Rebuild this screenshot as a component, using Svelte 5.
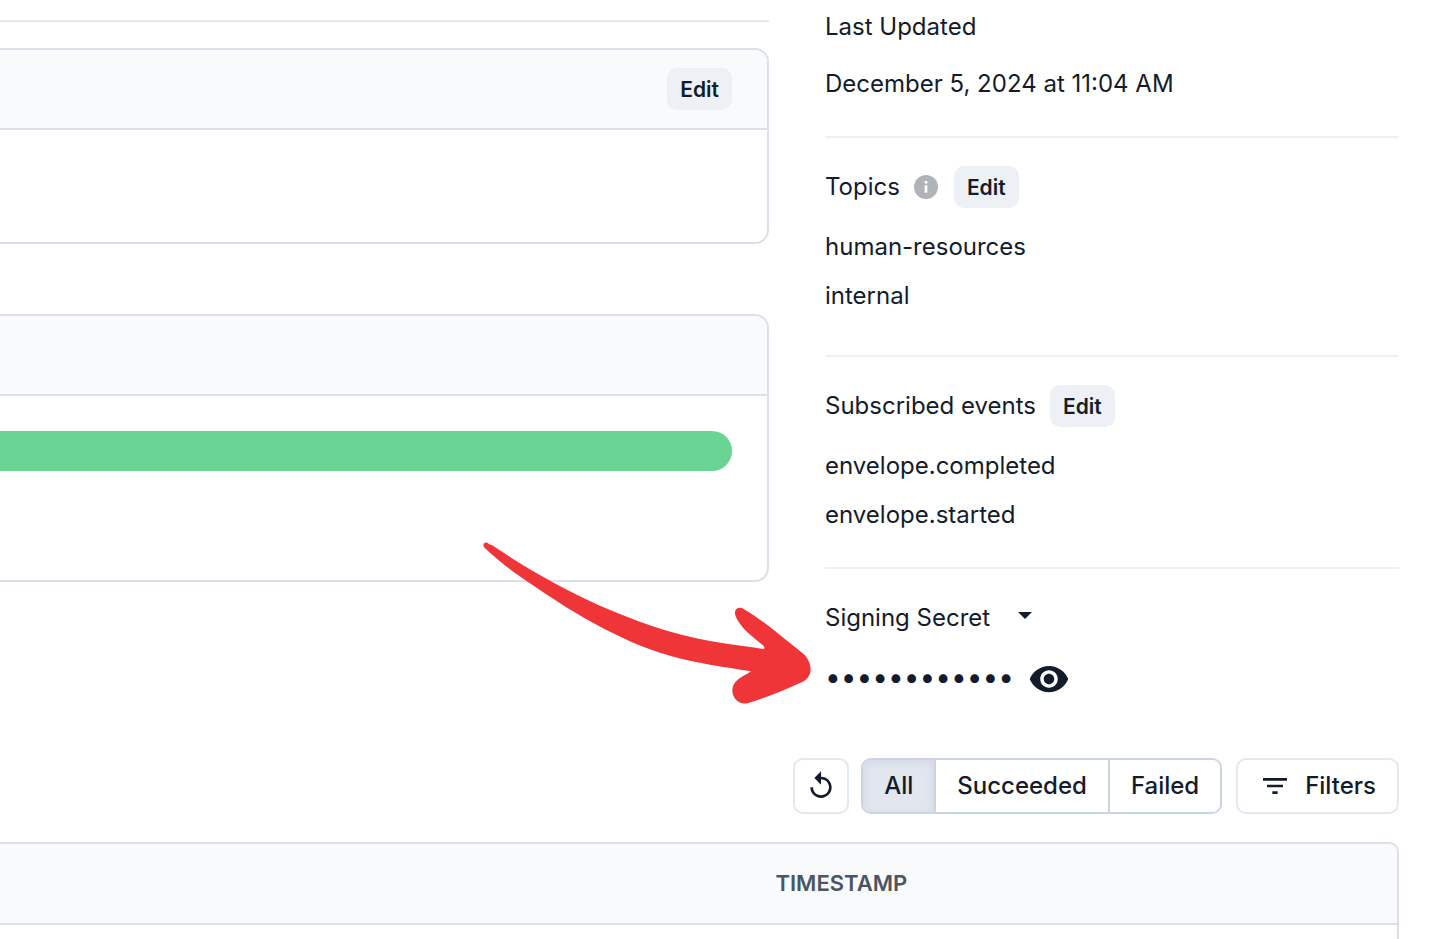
<script lang="ts">
  type Status = 'All' | 'Succeeded' | 'Failed';

  const topics = ['human-resources', 'internal'];
  const events = ['envelope.completed', 'envelope.started'];
  const statuses: Status[] = ['All', 'Succeeded', 'Failed'];

  let status = $state<Status>('All');
</script>

<main class="page">
  <div class="overview">
    <div class="panels">
      <hr class="rule" />

      <section class="card">
        <header class="card-head">
          <button type="button" class="edit">Edit</button>
        </header>
        <div class="card-body"></div>
      </section>

      <section class="card">
        <header class="card-head"></header>
        <div class="card-body tall">
          <div class="rate"></div>
        </div>
      </section>
    </div>

    <aside class="details">
      <section class="detail first">
        <div class="detail-head">Last Updated</div>
        <p class="value">December 5, 2024 at 11:04 AM</p>
      </section>

      <section class="detail topics">
        <div class="detail-head">
          <span>Topics</span>
          <svg class="info" viewBox="0 0 24 24" aria-hidden="true">
            <circle cx="12" cy="12" r="12" />
            <path d="M10.700 6h2.600v2.400h-2.600zM10.700 10.200h2.600v7.600h-2.600z" />
          </svg>
          <button type="button" class="edit">Edit</button>
        </div>
        <ul class="values">
          {#each topics as topic}
            <li class="value">{topic}</li>
          {/each}
        </ul>
      </section>

      <section class="detail">
        <div class="detail-head">
          <span>Subscribed events</span>
          <button type="button" class="edit">Edit</button>
        </div>
        <ul class="values">
          {#each events as event}
            <li class="value">{event}</li>
          {/each}
        </ul>
      </section>

      <section class="detail">
        <div class="detail-head">
          <label for="secret">Signing Secret</label>
          <button type="button" class="bare caret" aria-label="Signing secret options">
            <svg width="14" height="7" viewBox="0 0 14 7"><path d="M0 0h14L7 7z" /></svg>
          </button>
        </div>
        <div class="secret">
          <input id="secret" type="password" value="whsec_a1b2c3" readonly />
          <button type="button" class="bare" aria-label="Reveal secret">
            <svg width="42" height="42" viewBox="0 0 24 24">
              <path
                d="M12 4.500C7 4.500 2.730 7.610 1 12c1.730 4.390 6 7.500 11 7.500s9.270-3.110 11-7.500c-1.730-4.390-6-7.500-11-7.500zM12 17c-2.760 0-5-2.240-5-5s2.240-5 5-5 5 2.240 5 5-2.240 5-5 5zm0-8c-1.660 0-3 1.340-3 3s1.340 3 3 3 3-1.340 3-3-1.340-3-3-3z"
              />
            </svg>
          </button>
          <svg class="pointer" viewBox="39 36 984 486" aria-hidden="true">
            <path
              d="M40 44C42 37 52 35 57 43C66 43 75 52 85 58C175 119 285 180 390 227C500 275 610 313 720 333C775 343 830 349 880 357Q887 355 879 346C855 325 825 304 810 281C798 265 794 252 795 246C796 234 810 230 820 236C880 271 935 321 1000 371C1016 385 1022 405 1022 419C1021 437 1010 450 995 457C945 480 890 502 835 519C805 528 786 500 787 480C788 450 820 440 843 424C760 410 680 400 600 377C520 354 450 322 380 284C330 258 260 214 200 173C145 138 90 98 42 52Z"
            />
          </svg>
        </div>
      </section>
    </aside>
  </div>

  <div class="toolbar">
    <button type="button" class="tool icon-only" aria-label="Refresh">
      <svg width="32" height="32" viewBox="0 0 24 24">
        <path
          d="M12 5V1L7 6l5 5V7c3.310 0 6 2.690 6 6s-2.690 6-6 6-6-2.690-6-6H4c0 4.420 3.580 8 8 8s8-3.580 8-8-3.580-8-8-8z"
        />
      </svg>
    </button>
    <div class="segments" role="group" aria-label="Status">
      {#each statuses as item}
        <button
          type="button"
          class="segment"
          class:active={status === item}
          aria-pressed={status === item}
          onclick={() => (status = item)}
        >
          {item}
        </button>
      {/each}
    </div>
    <button type="button" class="tool">
      <svg width="32" height="32" viewBox="0 0 24 24">
        <path d="M10 18h4v-2h-4v2zM3 6v2h18V6H3zm3 7h12v-2H6v2z" />
      </svg>
      Filters
    </button>
  </div>

  <div class="log">
    <table>
      <thead>
        <tr>
          <td></td>
          <th scope="col">TIMESTAMP</th>
        </tr>
      </thead>
      <tbody>
        <tr>
          <td></td>
          <td></td>
        </tr>
      </tbody>
    </table>
  </div>
</main>

<style>
  :global(body) {
    margin: 0;
    background: #fff;
    overflow: hidden;
  }

  .page {
    box-sizing: border-box;
    height: 100vh;
    overflow: hidden;
    padding-right: 45px;
    color: #141c2b;
    font-family: Inter, sans-serif;
    font-size: 24px;
    line-height: 49px;
  }

  button {
    color: inherit;
    font: inherit;
    cursor: pointer;
  }

  svg {
    display: block;
    flex-shrink: 0;
    fill: currentColor;
  }

  .overview {
    display: grid;
    grid-template-columns: 1fr 574px;
    column-gap: 56px;
    align-items: start;
  }

  .panels {
    padding-top: 20px;
  }

  .rule {
    margin: 0 0 26px;
    border: 0;
    border-top: 2px solid #e2e8f0;
  }

  .card {
    margin-bottom: 70px;
    border: 2px solid #dfdfeb;
    border-left: 0;
    border-radius: 0 14px 14px 0;
    overflow: hidden;
  }

  .card:last-child {
    margin-bottom: 0;
  }

  .card-head {
    display: flex;
    align-items: center;
    justify-content: flex-end;
    height: 78px;
    padding-right: 35px;
    background: #f9fafc;
    border-bottom: 2px solid #dfdfeb;
  }

  .card-body {
    height: 112px;
  }

  .card-body.tall {
    box-sizing: border-box;
    height: 184px;
    padding: 35px 35px 0 0;
  }

  .rate {
    height: 40px;
    border-radius: 0 20px 20px 0;
    background: #6ad494;
  }

  .edit {
    height: 42px;
    padding: 2px 13px 0;
    border: 0;
    border-radius: 10px;
    background: #edf1f6;
    font-size: 21px;
    font-weight: 600;
    line-height: 40px;
  }

  .details {
    padding-top: 6px;
  }

  .detail {
    padding: 28px 0;
    border-bottom: 2px solid #edf1f5;
  }

  .detail.first {
    padding-top: 0;
  }

  .detail.topics {
    padding-bottom: 35px;
  }

  .detail:last-child {
    padding-bottom: 0;
    border-bottom: 0;
  }

  .detail-head {
    display: flex;
    align-items: center;
    gap: 14px;
    height: 42px;
    line-height: 42px;
  }

  .info {
    width: 24px;
    height: 24px;
    margin-right: 2px;
    fill: #b0b3b8;
  }

  .info path {
    fill: #fff;
  }

  .value {
    margin: 0;
  }

  .first .value {
    margin-top: 11px;
  }

  .values {
    margin: 14px 0 0;
    padding: 0;
    list-style: none;
  }

  .bare {
    padding: 0;
    border: 0;
    background: none;
  }

  .caret {
    padding: 0 14px 6px;
  }

  .secret {
    position: relative;
    display: flex;
    align-items: center;
    gap: 16px;
    height: 50px;
    margin-top: 15px;
  }

  .secret input {
    width: 187px;
    padding: 0 0 4px;
    border: 0;
    outline: 0;
    background: none;
    color: inherit;
    font: inherit;
    font-size: 28px;
  }

  .pointer {
    position: absolute;
    right: 100%;
    bottom: 0;
    width: 328px;
    height: 162px;
    margin-right: 14px;
    fill: #ef3538;
    pointer-events: none;
  }

  .toolbar {
    display: flex;
    justify-content: flex-end;
    gap: 14px;
    margin: 54px 0 28px;
    font-weight: 500;
    line-height: 52px;
  }

  .tool {
    display: flex;
    align-items: center;
    gap: 14px;
    height: 56px;
    padding: 0 21px;
    border: 2px solid #e2e8f0;
    border-radius: 10px;
    background: #fff;
  }

  .tool.icon-only {
    margin-right: -2px;
    padding: 0 10px;
  }

  .segments {
    display: flex;
    box-sizing: border-box;
    height: 56px;
    border: 2px solid #cbd5e1;
    border-radius: 10px;
    overflow: hidden;
  }

  .segment {
    padding: 0 21px;
    border: 0;
    border-right: 2px solid #cbd5e1;
    background: #fff;
  }

  .segment:last-child {
    border-right: 0;
  }

  .segment.active {
    background: #e2e6ef;
    box-shadow: inset 0 2px 8px rgba(180, 180, 205, 0.35);
  }

  .log {
    border: 2px solid #dfdfe9;
    border-left: 0;
    border-radius: 0 10px 0 0;
    overflow: hidden;
  }

  table {
    width: 100%;
    border-collapse: collapse;
  }

  td,
  th {
    width: 50%;
    padding: 0;
    text-align: left;
  }

  thead tr {
    height: 80px;
    background: #f9fafc;
    border-bottom: 2px solid #dfdfe9;
  }

  th {
    padding: 0 0 2px 77px;
    color: #4b5563;
    font-size: 22px;
    font-weight: 600;
    line-height: 28px;
  }

  tbody tr {
    height: 80px;
  }
</style>
